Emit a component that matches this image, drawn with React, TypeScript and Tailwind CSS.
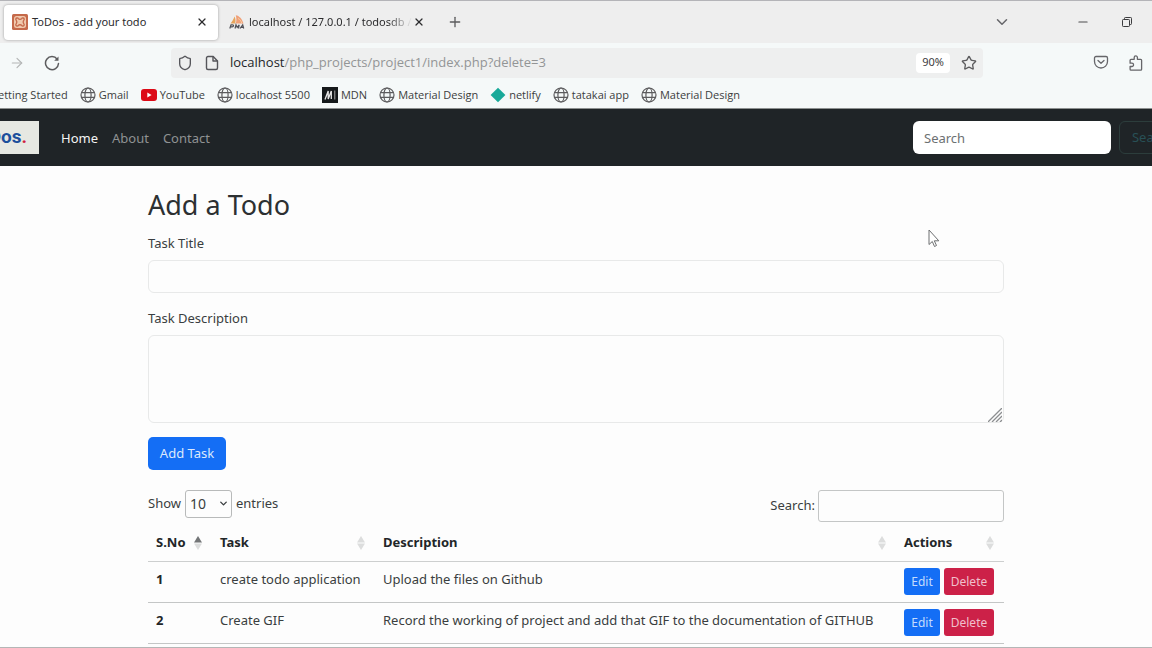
import React from "react";
import {
  ArrowRight,
  ChevronDown,
  Minus,
  Plus,
  Shield,
  Star,
  X,
} from "lucide-react";

function GlobeIcon() {
  return (
    <svg viewBox="0 0 16 16" className="size-4 shrink-0" fill="none" stroke="#5c5c5e" strokeWidth="1.2" aria-hidden="true">
      <circle cx="8" cy="8" r="7" />
      <ellipse cx="8" cy="8" rx="3.1" ry="7" />
      <path d="M1.6 5.7h12.8M1.6 10.3h12.8" />
    </svg>
  );
}

function YouTubeIcon() {
  return (
    <svg viewBox="0 0 16 16" className="size-4 shrink-0" aria-hidden="true">
      <rect x="0" y="2" width="16" height="12" rx="3" fill="#dc0a16" />
      <path d="M6.3 5.4v5l4.3-2.5z" fill="#fff" />
    </svg>
  );
}

function MdnIcon() {
  return (
    <svg viewBox="0 0 16 16" className="size-4 shrink-0" aria-hidden="true">
      <rect width="16" height="16" fill="#15191b" />
      <path d="M3 12.5 6.2 4v8L9.300 4v8" stroke="#e8e8e8" strokeWidth="1.300" fill="none" />
      <path d="M12.800 3.500v9" stroke="#a8a8a8" strokeWidth="1" />
    </svg>
  );
}

function NetlifyIcon() {
  return (
    <svg viewBox="0 0 16 16" className="size-4 shrink-0" aria-hidden="true">
      <path d="M8 .8 15.4 8 8 15.2.6 8z" fill="#18a999" />
    </svg>
  );
}

function XamppIcon() {
  return (
    <svg viewBox="0 0 16 16" className="size-4 shrink-0" aria-hidden="true">
      <rect width="16" height="16" rx="1.5" fill="#c5694a" />
      <rect x="2" y="2" width="12" height="12" rx="2.5" fill="#f0c8ac" />
      <path d="M3.800 5.200c0-1.400 2-1.600 2.600-.6.6.9 2.600.9 3.200 0 .6-1 2.600-.8 2.600.6 0 1-1 1.200-1 2.800s1 1.800 1 2.800c0 1.400-2 1.600-2.600.6-.6-.9-2.600-.9-3.200 0-.6 1-2.600.8-2.600-.6 0-1 1-1.200 1-2.800s-1-1.800-1-2.800z" fill="none" stroke="#c5694a" strokeWidth="1.300" />
    </svg>
  );
}

function PmaIcon() {
  return (
    <svg viewBox="0 0 16 16" className="size-4 shrink-0" aria-hidden="true">
      <path d="M1.500 9.500C3 8 4.800 4.800 5.600 2.500c1 2 1.200 4.800.6 7z" fill="#e6a45c" />
      <path d="M6.800 9.500c.8-3 .7-5.800 0-8.300 3.400.5 6.500 3.700 7.700 8.300z" fill="#f0a078" />
      <path d="M9 4.500c2 .8 3.200 2.500 3.700 4.600" stroke="#f8d0a8" fill="none" />
      <path d="M.8 14.500 2 10.800h1.600c1.400 0 1.200 2-.3 2H1.800M6 14.500l1-3.700 1.200 2.600 2-2.600-.7 3.700M11 14.500l2.700-3.700 1 3.700M12 13.400h2.300" stroke="#505058" strokeWidth="1.200" fill="none" />
    </svg>
  );
}

function ReloadIcon() {
  return (
    <svg viewBox="0 0 16 16" className="size-4 shrink-0" fill="none" stroke="#5c5c5e" strokeWidth="1.500" strokeLinecap="round" aria-hidden="true">
      <path d="M13.200 4.200A6.500 6.500 0 1 0 14.500 8.500" />
      <path d="M14.500 1.500v4.300h-4.300z" fill="#5c5c5e" stroke="none" />
    </svg>
  );
}

function PageIcon() {
  return (
    <svg viewBox="0 0 16 16" className="size-4 shrink-0" fill="none" stroke="#55555a" strokeWidth="1.400" strokeLinejoin="round" aria-hidden="true">
      <path d="M4 1.500h5.200L13.500 6v7a1.500 1.500 0 0 1-1.500 1.500H4A1.500 1.500 0 0 1 2.500 13V3A1.500 1.500 0 0 1 4 1.500z" />
      <path d="M9 1.500V6h4.500" />
    </svg>
  );
}

function PocketIcon() {
  return (
    <svg viewBox="0 0 16 16" className="size-4 shrink-0" fill="none" stroke="#66666a" strokeWidth="1.300" strokeLinecap="round" strokeLinejoin="round" aria-hidden="true">
      <path d="M3 1.500h10A1.500 1.500 0 0 1 14.500 3v3.500a6.500 6.500 0 0 1-13 0V3A1.500 1.500 0 0 1 3 1.500z" />
      <path d="m5 5.500 3 2.800 3-2.800" />
    </svg>
  );
}

function ExtensionIcon() {
  return (
    <svg viewBox="0 0 16 16" className="size-4 shrink-0" fill="none" stroke="#66666a" strokeWidth="1.300" strokeLinejoin="round" aria-hidden="true">
      <path d="M6.200 4.300V2.500a1.600 1.600 0 0 1 3.200 0v1.800h3.300a.9.900 0 0 1 .9.900v9a.9.900 0 0 1-.9.900H3a.9.900 0 0 1-.9-.9v-2.700h1.800a1.600 1.600 0 0 0 0-3.300H2.100V5.200a.9.900 0 0 1 .9-.9z" />
    </svg>
  );
}

function RestoreIcon() {
  return (
    <svg viewBox="0 0 10 10" className="size-[10px]" fill="none" stroke="#3c3c3e" aria-hidden="true">
      <rect x=".5" y="2.500" width="7" height="7" rx=".8" />
      <path d="M2.500 2.500V1.300a.8.800 0 0 1 .8-.8h5.400a.8.800 0 0 1 .8.800v5.400a.8.800 0 0 1-.8.800H7.500" />
    </svg>
  );
}

function SortIcon({ ascending = false }: { ascending?: boolean }) {
  return (
    <svg viewBox="0 0 8 14" className="h-[14px] w-2 shrink-0" aria-hidden="true">
      <path d="M4 0 8 6.500H0z" fill={ascending ? "#737577" : "#dcdddd"} />
      <path d="M4 14 0 7.500h8z" fill="#dcdddd" />
    </svg>
  );
}

const bookmarks = [
  { name: "Gmail", icon: <GlobeIcon /> },
  { name: "YouTube", icon: <YouTubeIcon /> },
  { name: "localhost 5500", icon: <GlobeIcon /> },
  { name: "MDN", icon: <MdnIcon /> },
  { name: "Material Design", icon: <GlobeIcon /> },
  { name: "netlify", icon: <NetlifyIcon /> },
  { name: "tatakai app", icon: <GlobeIcon /> },
  { name: "Material Design", icon: <GlobeIcon /> },
];

const tasks = [
  { title: "create todo application", description: "Upload the files on Github" },
  {
    title: "Create GIF",
    description: "Record the working of project and add that GIF to the documentation of GITHUB",
  },
];

const columns = ["S.No", "Task", "Description", "Actions"];

function TabStrip() {
  return (
    <div className="flex h-[43px] items-center border-t border-[#b4b4b8] bg-[#eeeeee] text-[11px] text-[#2c2c2e]">
      <div className="ml-1 flex h-[35px] w-[214px] items-center rounded bg-white px-2 shadow-[0_0_3px_rgba(0,0,0,0.35)]">
        <XamppIcon />
        <span className="ml-1 flex-1 whitespace-nowrap">ToDos - add your todo</span>
        <button aria-label="Close tab" className="flex size-4 items-center justify-center">
          <X className="size-3" strokeWidth={2.5} />
        </button>
      </div>
      <div className="flex h-[35px] w-[209px] items-center pl-[11px]">
        <PmaIcon />
        <span className="ml-1 flex-1 whitespace-nowrap [mask-image:linear-gradient(to_right,black_85%,transparent)]">
          localhost / 127.0.0.1 / todosdb /
        </span>
        <button aria-label="Close tab" className="flex size-4 items-center justify-center">
          <X className="size-3" strokeWidth={2.5} />
        </button>
      </div>
      <button aria-label="New tab" className="ml-5">
        <Plus className="size-4 text-[#5c5c5e]" strokeWidth={2} />
      </button>
      <div className="ml-auto flex items-center">
        <button aria-label="List all tabs" className="mr-[65px]">
          <ChevronDown className="size-[18px] text-[#66666a]" strokeWidth={2} />
        </button>
        <button aria-label="Minimize" className="mr-8">
          <Minus className="size-[14px] text-[#4c4c4e]" strokeWidth={2} />
        </button>
        <button aria-label="Restore" className="mr-5">
          <RestoreIcon />
        </button>
      </div>
    </div>
  );
}

function AddressBar() {
  return (
    <div className="flex h-[39px] items-center">
      <button aria-label="Forward" className="ml-[9px]">
        <ArrowRight className="size-4 text-[#b4b6b6]" strokeWidth={1.75} />
      </button>
      <button aria-label="Reload" className="ml-[19px]">
        <ReloadIcon />
      </button>
      <div className="mr-[110px] ml-[111px] flex h-[30px] flex-1 items-center rounded bg-[#eeefef] px-[6px]">
        <Shield className="size-4 text-[#55555a]" strokeWidth={2} />
        <span className="ml-[11px]">
          <PageIcon />
        </span>
        <span className="ml-[10px] flex-1 font-['Open_Sans',sans-serif] text-[13px] whitespace-nowrap text-[#939596]">
          <span className="text-[#242628]">localhost</span>/php_projects/project1/index.php?delete=3
        </span>
        <button className="h-5 w-[34px] rounded bg-white text-[11px] text-[#3c3c3e]">90%</button>
        <button aria-label="Bookmark this page" className="ml-[11px]">
          <Star className="size-4 text-[#5c5c5e]" strokeWidth={2} />
        </button>
      </div>
      <button aria-label="Save to Pocket">
        <PocketIcon />
      </button>
      <button aria-label="Extensions" className="mr-2 ml-[19px]">
        <ExtensionIcon />
      </button>
    </div>
  );
}

function BookmarksBar() {
  return (
    <nav aria-label="Bookmarks" className="flex h-[27px] items-center gap-3 border-b border-[#8c9090] font-['Open_Sans',sans-serif] text-[11px] whitespace-nowrap text-[#3c3e40]">
      <a href="#" className="-ml-[10px]">Getting Started</a>
      {bookmarks.map((bookmark, index) => (
        <a key={index} href="#" className="flex items-center gap-[3px]">
          {bookmark.icon}
          {bookmark.name}
        </a>
      ))}
    </nav>
  );
}

function Navbar() {
  return (
    <header className="flex h-[57px] items-center overflow-hidden bg-[#1f2427] text-[13px]">
      <a
        href="#"
        className="flex h-[33px] w-[39px] shrink-0 items-center justify-end overflow-hidden bg-[#e6e8e2] pr-3 font-['Liberation_Sans_Narrow','Roboto',sans-serif] text-[19px] font-bold text-[#1c4f9c]"
      >
        ToDos<span className="text-[#d02040]">.</span>
      </a>
      <nav aria-label="Main" className="ml-[22px] flex gap-[14px] pt-[2px] text-[#8f9293]">
        <a href="#" className="text-[#f4f4f4]">Home</a>
        <a href="#">About</a>
        <a href="#">Contact</a>
      </nav>
      <form className="-mr-[34px] ml-auto flex gap-2" onSubmit={(event) => event.preventDefault()}>
        <input
          type="search"
          aria-label="Search"
          placeholder="Search"
          className="h-[33px] w-[198px] rounded-md bg-white px-[11px] placeholder:text-[#6c7072]"
        />
        <button className="h-[33px] w-[67px] rounded-md border border-[#2c3d3c] text-[#285056]">Search</button>
      </form>
    </header>
  );
}

function TodoForm() {
  return (
    <form onSubmit={(event) => event.preventDefault()}>
      <h1 className="text-[27px] leading-8 text-[#2c3032]">Add a Todo</h1>
      <label htmlFor="title" className="mt-3 block leading-5">Task Title</label>
      <input id="title" className="mt-[7px] block h-[33px] w-full rounded-md border border-[#e8e9e9] bg-transparent px-3" />
      <label htmlFor="description" className="mt-[15px] block leading-5">Task Description</label>
      <div className="relative mt-[7px]">
        <textarea id="description" className="block h-[88px] w-full resize-none rounded-md border border-[#e8e9e9] bg-transparent px-3 py-1" />
        <svg viewBox="0 0 14 14" className="pointer-events-none absolute right-[2px] bottom-[1px] size-[14px]" stroke="#8c8e90" strokeWidth="1.300" aria-hidden="true">
          <path d="M0 14 14 0M4 14 14 4M8 14l6-6M12 14l2-2" />
        </svg>
      </div>
      <button className="mt-[14px] block h-[33px] w-[78px] rounded-[5px] bg-[#146ef5] text-[13px] text-[#dce9fc]">Add Task</button>
    </form>
  );
}

function TodoTable() {
  return (
    <section className="mt-5">
      <div className="flex items-start justify-between">
        <div className="flex items-center gap-1">
          <label htmlFor="length">Show</label>
          <div className="relative">
            <select id="length" defaultValue="10" className="block h-7 w-[47px] appearance-none rounded-[3px] border border-[#b8baba] bg-transparent pl-1 text-sm">
              <option>10</option>
              <option>25</option>
              <option>50</option>
            </select>
            <ChevronDown className="pointer-events-none absolute top-2 right-[3px] size-[11px]" strokeWidth={3} />
          </div>
          <label htmlFor="length">entries</label>
        </div>
        <div className="flex items-center gap-[3px]">
          <label htmlFor="filter">Search:</label>
          <input id="filter" type="search" className="h-8 w-[186px] rounded-[3px] border border-[#c4c6c6] bg-transparent px-1" />
        </div>
      </div>
      <table className="mt-[3px] w-full table-fixed border-collapse text-left whitespace-nowrap">
        <colgroup>
          <col className="w-16" />
          <col className="w-[163px]" />
          <col />
          <col className="w-[108px]" />
        </colgroup>
        <thead>
          <tr className="h-9 border-b border-[#cdcfcf]">
            {columns.map((column, index) => (
              <th key={column} className="py-0 pr-[10px] pl-2 font-bold text-[#222628]">
                <div className="flex items-center justify-between">
                  {column}
                  <SortIcon ascending={index === 0} />
                </div>
              </th>
            ))}
          </tr>
        </thead>
        <tbody>
          {tasks.map((task, index) => (
            <tr key={task.title} className="h-[41px] border-b border-[#c4c6c6]">
              <th scope="row" className="pt-0 pb-1 pl-2 font-bold text-[#222628]">{index + 1}</th>
              <td className="pt-0 pb-1 pl-2">{task.title}</td>
              <td className="pt-0 pb-1 pl-2">{task.description}</td>
              <td className="py-0 pl-2">
                <div className="flex gap-1 text-xs">
                  <button className="h-[27px] w-9 rounded-[3px] bg-[#146ef5] text-[#c4dcfc]">Edit</button>
                  <button className="h-[27px] w-[50px] rounded-[3px] bg-[#cc2148] text-[#f0c0cc]">Delete</button>
                </div>
              </td>
            </tr>
          ))}
        </tbody>
      </table>
    </section>
  );
}

export default function App() {
  return (
    <div className="relative flex min-h-screen flex-col overflow-hidden border-b border-[#b4b6b6] bg-[#fdfdfd] font-['Noto_Sans',sans-serif] text-[13px] text-[#3a3e40]">
      <div className="bg-[#f5f9f9]">
        <TabStrip />
        <AddressBar />
        <BookmarksBar />
      </div>
      <Navbar />
      <main className="mx-auto w-full max-w-[856px] pt-[23px]">
        <TodoForm />
        <TodoTable />
      </main>
      <svg viewBox="0 0 12 19" className="pointer-events-none absolute top-[229px] left-[928px] h-[19px] w-3" fill="#fff" stroke="#6c6e70" aria-hidden="true">
        <path d="M1 1v14.500l3.300-3 2.200 5 2-1-2.200-4.700h4.500z" />
      </svg>
    </div>
  );
}
